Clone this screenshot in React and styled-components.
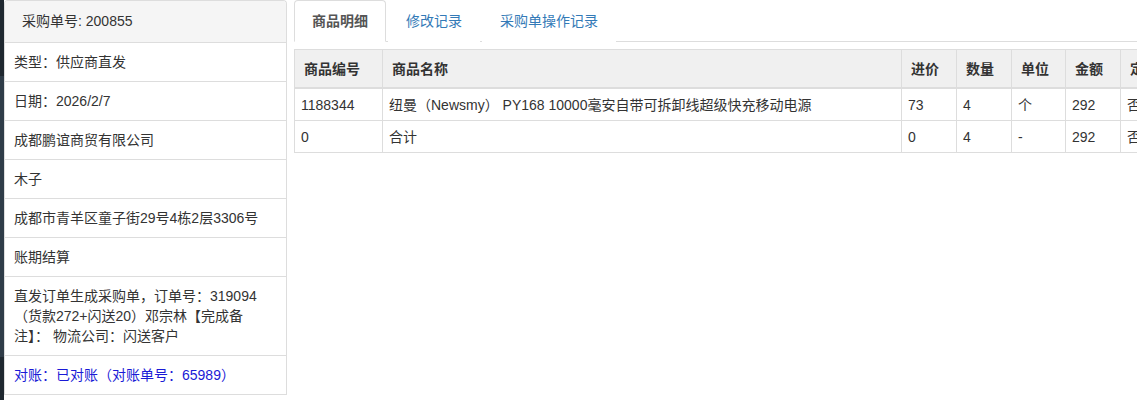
import React from 'react';
import styled, { createGlobalStyle } from 'styled-components';

const GlobalStyle = createGlobalStyle`
  body {
    margin: 0;
    background: #fff;
    font-family: "Liberation Sans", "Noto Sans CJK SC", sans-serif;
    font-size: 14px;
    color: #333;
  }
`;

const info = [
  { text: '类型：供应商直发' },
  { text: '日期：2026/2/7' },
  { text: '成都鹏谊商贸有限公司' },
  { text: '木子' },
  { text: '成都市青羊区童子街29号4栋2层3306号' },
  { text: '账期结算' },
  { lines: ['直发订单生成采购单，订单号：319094', '（货款272+闪送20）邓宗林【完成备', '注】： 物流公司：闪送客户'] },
  { text: '对账：已对账（对账单号：65989）', link: true },
];

const columns = [
  { title: '商品编号', width: 88 },
  { title: '商品名称', width: 519 },
  { title: '进价', width: 55 },
  { title: '数量', width: 55 },
  { title: '单位', width: 54 },
  { title: '金额', width: 55 },
  { title: '定制', width: 60 },
];

const rows = [
  ['1188344', '纽曼（Newsmy） PY168 10000毫安自带可拆卸线超级快充移动电源', '73', '4', '个', '292', '否'],
  ['0', '合计', '0', '4', '-', '292', '否'],
];

function App() {
  return (
    <Page>
      <GlobalStyle />
      <Sidebar>
        <SideBlock dark h={76} />
        <SideBlock h={281} />
        <SideBlock dark h={60} />
      </Sidebar>
      <Panel>
        <PanelHeading>采购单号: 200855</PanelHeading>
        {info.map((item, i) => (
          <Item key={i} link={item.link}>
            {item.lines
              ? item.lines.map((l, j) => <Line key={j}>{l}</Line>)
              : item.text}
          </Item>
        ))}
      </Panel>
      <Main>
        <Tabs>
          <Tab active>商品明细</Tab>
          <Tab>修改记录</Tab>
          <Tab>采购单操作记录</Tab>
        </Tabs>
        <TableWrap>
          <Table>
            <colgroup>
              {columns.map((c) => <col key={c.title} style={{ width: c.width }} />)}
            </colgroup>
            <thead>
              <tr>
                {columns.map((c) => <Th key={c.title}>{c.title}</Th>)}
              </tr>
            </thead>
            <tbody>
              {rows.map((r, i) => (
                <tr key={i}>
                  {r.map((v, j) => <Td key={j}>{v}</Td>)}
                </tr>
              ))}
            </tbody>
          </Table>
        </TableWrap>
      </Main>
    </Page>
  );
}

export default App;

const Page = styled.div`
  display: flex;
  align-items: flex-start;
  height: 400px;
  overflow: hidden;
`;

const Sidebar = styled.div`
  width: 4px;
  flex-shrink: 0;
  display: flex;
  flex-direction: column;
`;

const SideBlock = styled.div`
  height: ${p => p.h}px;
  background: ${p => p.dark ? '#1f2830' : '#2f3c48'};
`;

const Panel = styled.div`
  width: 283px;
  flex-shrink: 0;
  box-sizing: border-box;
  border: 1px solid #ddd;
  border-bottom: none;
  border-radius: 4px 4px 0 0;
  background: #fff;
  overflow: hidden;
`;

const PanelHeading = styled.div`
  background: #f5f5f5;
  padding: 10px 17px 11px;
  line-height: 20px;
  border-bottom: 1px solid #ddd;
  color: #333;
`;

const Item = styled.div`
  padding: 9px 9px;
  line-height: 20px;
  border-bottom: 1px solid #ddd;
  color: ${p => p.link ? '#1a1ad6' : '#333'};
`;

const Line = styled.div`
  white-space: nowrap;
`;

const Main = styled.div`
  flex: 1;
  min-width: 0;
  margin-left: 7px;
  overflow: hidden;
`;

const Tabs = styled.div`
  display: flex;
  border-bottom: 1px solid #ddd;
  height: 42px;
  box-sizing: border-box;
`;

const Tab = styled.div`
  padding: 10px 17px;
  line-height: 20px;
  margin-right: 2px;
  margin-bottom: -1px;
  border: 1px solid ${p => p.active ? '#ddd' : 'transparent'};
  border-bottom-color: ${p => p.active ? '#fff' : 'transparent'};
  border-radius: 4px 4px 0 0;
  background: #fff;
  color: ${p => p.active ? '#555' : '#337ab7'};
  font-weight: ${p => p.active ? 'bold' : 'normal'};
  white-space: nowrap;
`;

const TableWrap = styled.div`
  margin-top: 7px;
`;

const Table = styled.table`
  border-collapse: collapse;
  table-layout: fixed;
  width: 886px;
`;

const Th = styled.th`
  background: #f0f0f0;
  border: 1px solid #ddd;
  border-bottom: 2px solid #ddd;
  padding: 9px 9px 8px;
  line-height: 20px;
  text-align: left;
  font-weight: bold;
  color: #333;
  white-space: nowrap;
  overflow: hidden;
`;

const Td = styled.td`
  border: 1px solid #ddd;
  padding: 6px 6px 5px;
  line-height: 20px;
  white-space: nowrap;
  overflow: hidden;
`;
